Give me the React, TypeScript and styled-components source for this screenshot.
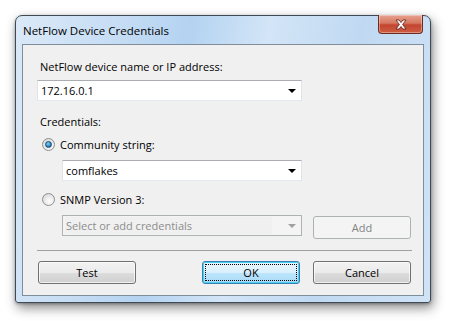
import React from "react";
import styled, { createGlobalStyle, css } from "styled-components";

const GlobalStyle = createGlobalStyle`
  html, body {
    margin: 0;
    padding: 0;
    background: #ffffff;
  }
  body {
    font-family: "Open Sans", "Noto Sans", sans-serif;
    font-size: 11px;
    color: #000;
  }
`;

const Page = styled.div`
  width: 449px;
  height: 321px;
  padding: 15px 0 0 15px;
  box-sizing: border-box;
`;

const Window = styled.div`
  width: 416px;
  height: 288px;
  box-sizing: border-box;
  border: 1px solid #3f4a57;
  border-radius: 7px 7px 3px 3px;
  background: linear-gradient(
    100deg,
    #dbe9f8 0%,
    #c6ddf4 22%,
    #b4d3f1 38%,
    #d3e5f7 55%,
    #c0d9f2 75%,
    #d0e3f6 100%
  );
  box-shadow: 2px 5px 12px rgba(0, 0, 0, 0.45), 0 1px 3px rgba(0, 0, 0, 0.3);
  display: flex;
  flex-direction: column;
  padding: 0 6px 6px 6px;
`;

const TitleBar = styled.div`
  height: 28px;
  display: flex;
  align-items: flex-start;
  justify-content: space-between;
`;

const Title = styled.span`
  margin-top: 7px;
  margin-left: 1px;
  font-size: 11.5px;
  line-height: 16px;
  color: #000;
`;

const CloseButton = styled.div`
  width: 45px;
  height: 19px;
  margin-top: -1px;
  margin-right: 1px;
  box-sizing: border-box;
  border: 1px solid #6e2b22;
  border-top: none;
  border-radius: 0 0 4px 4px;
  background: linear-gradient(#e7a38f 0%, #d67760 45%, #c24530 55%, #cf5d43 100%);
  box-shadow: inset 0 0 0 1px rgba(255, 255, 255, 0.35);
  display: flex;
  align-items: center;
  justify-content: center;
`;

const Client = styled.div`
  flex: 1;
  box-sizing: border-box;
  border: 1px solid #7f8c99;
  background: #f0f0f0;
  display: flex;
  flex-direction: column;
  padding: 0 12px 0 14px;
`;

const Label = styled.div<{ $top: number; $left?: number }>`
  margin-top: ${(p) => p.$top}px;
  margin-left: ${(p) => p.$left ?? 3}px;
  line-height: 16px;
  height: 16px;
`;

const Combo = styled.div<{ $top: number; $left?: number; $width: number; $disabled?: boolean }>`
  margin-top: ${(p) => p.$top}px;
  margin-left: ${(p) => p.$left ?? 0}px;
  width: ${(p) => p.$width}px;
  height: 21px;
  box-sizing: border-box;
  border: 1px solid #e2e3ea;
  border-top-color: #abadb3;
  border-bottom-color: #e3e9ef;
  background: #fff;
  display: flex;
  align-items: center;
  padding: 0 5px 0 2px;
  ${(p) =>
    p.$disabled &&
    css`
      border: 1px solid #adb2b5;
      background: #f4f4f4;
    `}
`;

const ComboField = styled.div<{ $disabled?: boolean }>`
  flex: 1;
  height: 17px;
  line-height: 17px;
  padding-left: 1px;
  color: ${(p) => (p.$disabled ? "#8d8d8d" : "#000")};
  background: ${(p) => (p.$disabled ? "#f0f0f0" : "transparent")};
  margin-right: ${(p) => (p.$disabled ? 12 : 0)}px;
`;

const Arrow = styled.div<{ $disabled?: boolean }>`
  width: 0;
  height: 0;
  border-left: 4px solid transparent;
  border-right: 4px solid transparent;
  border-top: 4px solid ${(p) => (p.$disabled ? "#a0a0a0" : "#000")};
  margin-left: 4px;
`;

const RadioRow = styled.div<{ $top: number }>`
  margin-top: ${(p) => p.$top}px;
  margin-left: 5px;
  height: 16px;
  display: flex;
  align-items: center;
  gap: 5px;
`;

const Radio = styled.div<{ $checked?: boolean }>`
  width: 13px;
  height: 13px;
  box-sizing: border-box;
  border-radius: 50%;
  border: 1px solid #8e8f8f;
  background: radial-gradient(circle at 60% 65%, #ffffff 0%, #e6e6e6 55%, #cfcfcf 100%);
  display: flex;
  align-items: center;
  justify-content: center;
  &::after {
    content: "";
    display: ${(p) => (p.$checked ? "block" : "none")};
    width: 5px;
    height: 5px;
    border-radius: 50%;
    border: 0.5px solid #1b4e79;
    background: radial-gradient(circle at 40% 35%, #8fd3f5 0%, #2e89c4 55%, #0f4a7d 100%);
  }
`;

const Row = styled.div<{ $top: number }>`
  margin-top: ${(p) => p.$top}px;
  display: flex;
  align-items: flex-start;
`;

const Separator = styled.div`
  margin-top: 11px;
  width: 375px;
  height: 1px;
  background: #a0a0a0;
`;

const ButtonBar = styled.div`
  margin-top: 10px;
  margin-left: 1px;
  width: 373px;
  display: flex;
  justify-content: space-between;
`;

const Button = styled.div<{ $variant?: "default" | "disabled" | "normal" }>`
  width: 98px;
  height: 23px;
  box-sizing: border-box;
  border: 1px solid #707070;
  border-radius: 3px;
  background: linear-gradient(#f2f2f2 0%, #ebebeb 50%, #dddddd 51%, #cfcfcf 100%);
  box-shadow: inset 0 0 0 1px rgba(255, 255, 255, 0.7);
  display: flex;
  align-items: center;
  justify-content: center;
  color: #000;
  line-height: 16px;
  position: relative;
  ${(p) =>
    p.$variant === "default" &&
    css`
      border-color: #3c7fb1;
      box-shadow: inset 0 0 0 1px #48d0f4;
      background: linear-gradient(#eaf6fd 0%, #d9f0fc 50%, #bee6fd 51%, #a7d9f5 100%);
      &::after {
        content: "";
        position: absolute;
        inset: 2px;
        border: 1px dotted #000;
      }
    `}
  ${(p) =>
    p.$variant === "disabled" &&
    css`
      border-color: #adb2b5;
      background: #f4f4f4;
      box-shadow: none;
      color: #838383;
    `}
`;

const ButtonSpacer = styled.div`
  display: flex;
  gap: 13px;
`;

const CloseIcon = () => (
  <svg width="14" height="11" viewBox="0 0 14 11">
    <path
      d="M2 1 L5 1 L7 3.5 L9 1 L12 1 L8.6 5.5 L12 10 L9 10 L7 7.5 L5 10 L2 10 L5.4 5.5 Z"
      fill="#ffffff"
      stroke="#5a1d14"
      strokeWidth="0.8"
      strokeLinejoin="round"
    />
  </svg>
);

export default function App() {
  return (
    <>
      <GlobalStyle />
      <Page>
        <Window>
          <TitleBar>
            <Title>NetFlow Device Credentials</Title>
            <CloseButton>
              <CloseIcon />
            </CloseButton>
          </TitleBar>
          <Client>
            <Label $top={14}>NetFlow device name or IP address:</Label>
            <Combo $top={5} $width={265}>
              <ComboField>172.16.0.1</ComboField>
              <Arrow />
            </Combo>
            <Label $top={13}>Credentials:</Label>
            <RadioRow $top={6}>
              <Radio $checked />
              <span>Community string:</span>
            </RadioRow>
            <Combo $top={8} $left={25} $width={240}>
              <ComboField>comflakes</ComboField>
              <Arrow />
            </Combo>
            <RadioRow $top={10}>
              <Radio />
              <span>SNMP Version 3:</span>
            </RadioRow>
            <Row $top={8}>
              <Combo $top={0} $left={25} $width={240} $disabled>
                <ComboField $disabled>Select or add credentials</ComboField>
                <Arrow $disabled />
              </Combo>
              <Button $variant="disabled" style={{ marginLeft: 11, marginTop: 1 }}>
                Add
              </Button>
            </Row>
            <Separator />
            <ButtonBar>
              <Button>Test</Button>
              <ButtonSpacer>
                <Button $variant="default">OK</Button>
                <Button>Cancel</Button>
              </ButtonSpacer>
            </ButtonBar>
          </Client>
        </Window>
      </Page>
    </>
  );
}
